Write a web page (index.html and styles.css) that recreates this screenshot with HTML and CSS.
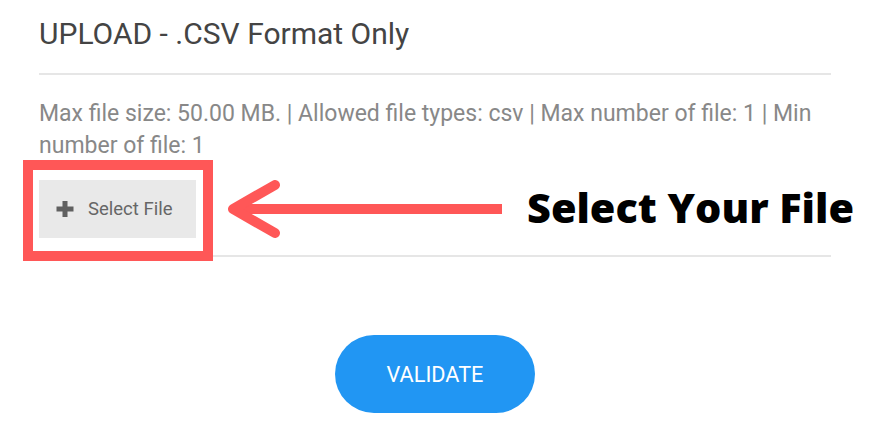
FILE: index.html
```html
<!DOCTYPE html>
<html>
<head>
<meta charset="utf-8">
<link rel="stylesheet" href="styles.css">
</head>
<body>
<main class="panel">
  <h2 class="title">UPLOAD - .CSV Format Only</h2>
  <div class="rule"></div>
  <p class="info">Max file size: 50.00 MB. | Allowed file types: csv | Max number of file: 1 | Min number of file: 1</p>
  <div class="picker">
    <button class="select-btn">
      <svg class="plus" viewBox="0 0 20 18" width="20" height="18"><path d="M7.5 1h5v5.5h6v5h-6v5.5h-5v-5.5h-6v-5h6z" fill="#606060"/></svg>
      <span>Select File</span>
    </button>
    <div class="highlight"></div>
    <svg class="arrow" width="290" height="60" viewBox="0 0 290 60">
      <path d="M279 29H14" fill="none" stroke="#ff5757" stroke-width="10"/>
      <path d="M52 5L10 29L52 53" fill="none" stroke="#ff5757" stroke-width="10" stroke-linecap="round" stroke-linejoin="round"/>
    </svg>
    <div class="callout">Select Your File</div>
  </div>
  <div class="rule"></div>
  <div class="actions">
    <button class="validate">VALIDATE</button>
  </div>
</main>
</body>
</html>
```
FILE: styles.css
```css
html, body { margin: 0; padding: 0; background: #fff; }
body { font-family: Roboto, "Liberation Sans", sans-serif; }
.panel { width: 792px; padding: 0 0 0 39px; }
.title { margin: 0; padding-top: 15px; height: 58px; font-size: 30px; font-weight: 400; color: #444; line-height: 38px; }
.rule { height: 2px; background: #e6e6e6; }
.info { margin: 0; padding-top: 23px; font-size: 23px; line-height: 32px; color: #888; }
.picker { position: relative; height: 93px; padding-top: 18px; box-sizing: border-box; }
.select-btn { display: flex; align-items: center; gap: 13px; width: 157px; height: 58px; padding: 0 0 0 16px; border: 0; background: #e9e9e9; font-family: Roboto, "Liberation Sans", sans-serif; font-size: 18.5px; color: #666; }
.plus { display: block; }
.highlight { position: absolute; left: -16px; top: -2px; width: 170px; height: 81px; border: 10px solid #ff5757; }
.arrow { position: absolute; left: 184px; top: 18px; }
.callout { position: absolute; left: 488px; top: 17px; white-space: nowrap; font-family: "Open Sans", sans-serif; font-weight: 800; font-size: 41.4px; color: #000; line-height: 56px; }
.actions { display: flex; justify-content: center; padding-top: 78px; }
.validate { width: 200px; height: 78px; border: 0; border-radius: 39px; background: #2196f3; color: #fff; font-family: Roboto, "Liberation Sans", sans-serif; font-size: 21.7px; }
```
